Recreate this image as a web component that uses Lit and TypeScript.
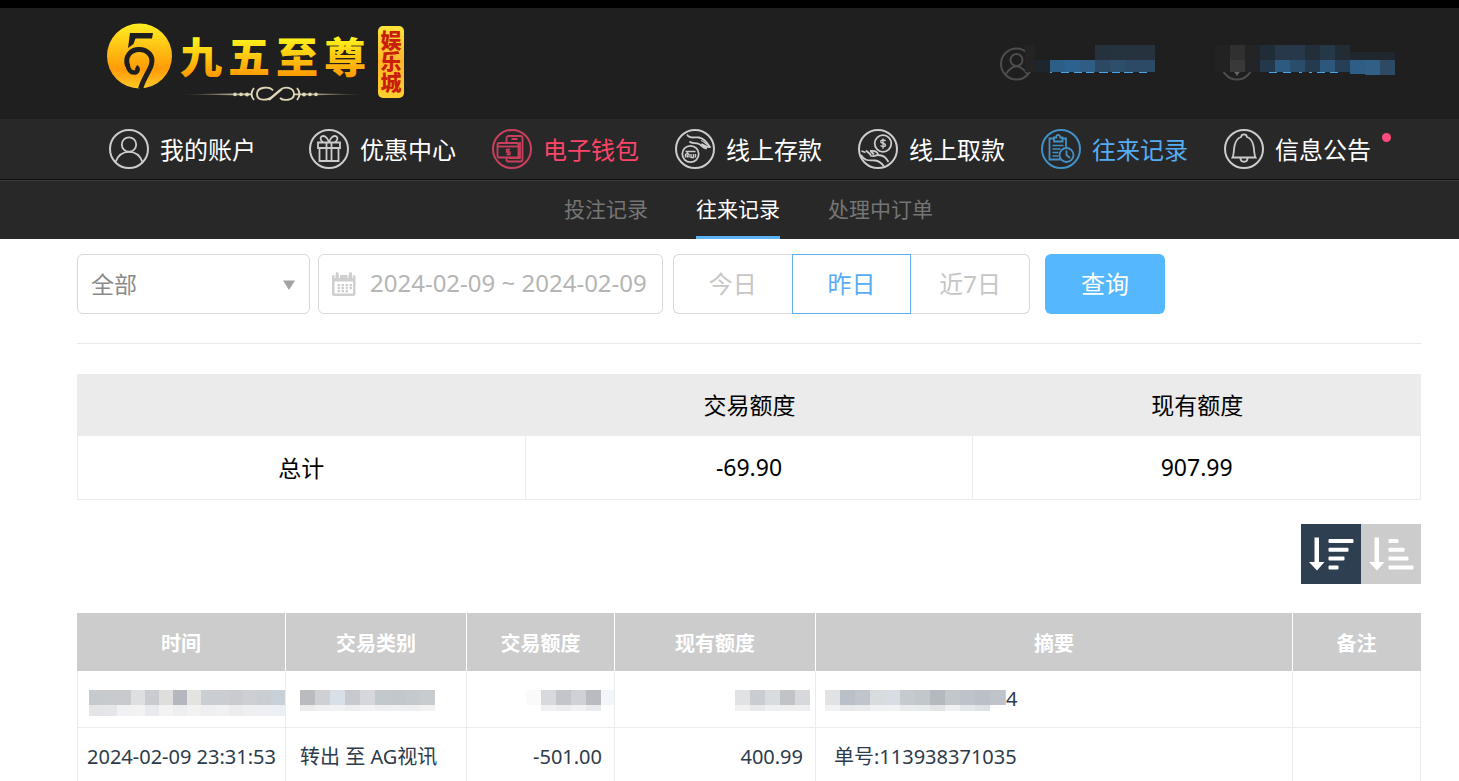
import { LitElement, html, css, svg, nothing } from "lit";
import { customElement, state } from "lit/decorators.js";
import { classMap } from "lit/directives/class-map.js";

const ring = svg`<circle cx="20" cy="20" r="19" stroke-width="2"/>`;

const icons = {
  user: svg`${ring}<circle cx="20" cy="15.5" r="7.2"/><path d="M6.5 33C9 26 14 22.800 20 22.800S31 26 33.500 33"/>`,
  gift: svg`${ring}<path d="M9 13.500h22v5.500H9zM10.500 19h19v13h-19zM17.500 13.500V32M22.500 13.500V32"/><path d="M20 13C18 8 15 6 12.500 7.500C10.500 9 12 12 14 13.300M20 13C22 8 25 6 27.500 7.500C29.500 9 28 12 26 13.300"/>`,
  wallet: svg`${ring}<path d="M14.500 14V9a2 2 0 0 1 2-2h12a2 2 0 0 1 2 2v21.500a2 2 0 0 1-2 2h-12a2 2 0 0 1-2-2V29M19.500 10h6M17 29h11V13"/><rect x="5.500" y="14" width="21" height="14.500" rx="1.500"/><path d="M5.500 17.500h21"/><path d="M18 20.500h-3.500v2.500H18v2.500h-3.500M16.200 19.500v7" stroke-width="1.300"/>`,
  deposit: svg`${ring}<circle cx="15.500" cy="25" r="8.200"/><path d="M10.500 22.500h10M10.500 28.500v-3l2-1.500 1.500 1.500v3M12.300 28.500v-3M16 25v3.500h2.500V25M20.500 25v3.500" stroke-width="1.400"/><path d="M12 5.500C14 10 19 8 24 8.500C28 9 31 12 35 18C32 19 29 16 26.500 15C29 17 32 18 31 19.500C28 18.500 26 16 24 15C20 13.500 17 15 14.500 12.500"/><path d="M26 11.500c3 1 5 3.500 8 5.500" stroke-width="1.200"/>`,
  withdraw: svg`${ring}<circle cx="25" cy="14.500" r="8.300"/><path d="M27.500 12c-1-1.500-5-1.300-4.700.8c.3 1.800 4.600 1.200 4.700 3.300c0 2-4 2-5 .4M25 9.500v10.300" stroke-width="1.400"/><path d="M3.500 22l4 1.500M8 21.500l5 4.500M12.500 22l3.500 3.500"/><path d="M12 22c5-.500 7.500 1 8 3.500c-2 1.500-5 2-8 1M19.500 26.500c4-1 8 1 11 6.500M3 26c4 7 9 5 14 5.500c5 .5 7 3 9 6"/>`,
  record: svg`${ring}<path d="M13.500 9.500h-5V30.500h11M25 18V9.500h-4.500M13 12.500V8.500h2.200c0-3.500 4-3.500 4 0h2.300v4z"/><path d="M11.500 16.500h11M11.500 20h8M11.500 23.500h6M11.500 27h6" stroke-width="1.500"/><circle cx="25.500" cy="26" r="7"/><path d="M25.500 21.500V26l3.500 3"/>`,
  bell: svg`${ring}<path d="M8.500 28.500C10 26 9.500 22 10.500 17C11.500 12 13.500 9 17 8c.5-3.500 5.500-3.500 6 0C26.500 9 28.500 12 29.500 17c1 5 .5 9 2 11.500zM16.500 29c0 5 7 5 7 0"/>`,
};

const calendar = svg`<path d="M1.500 4H4V2.500a1.500 1.500 0 0 1 3 0V4H17.500V2.500a1.500 1.500 0 0 1 3 0V4h2A1.500 1.500 0 0 1 24 5.500V23a2 2 0 0 1-2 2H2.500a2 2 0 0 1-2-2V5.500A1.500 1.500 0 0 1 1.500 4z" fill="#cfcfcf"/><path d="M3 10.500h18.500v12H3z" fill="#fff"/><path d="M6 13h2.500v2.200H6zM10 13h2.500v2.200H10zM14 13h2.500v2.200H14zM18 13h2.500v2.200H18zM6 16h2.500v2.200H6zM10 16h2.500v2.200H10zM14 16h2.500v2.200H14zM18 16h2.500v2.200H18zM6 19h2.500v2.200H6zM10 19h2.500v2.200H10zM14 19h2.500v2.200H14z" fill="#cfcfcf"/><path d="M3.500 1v6M8 1v6M16.500 1v6M21.300 1v6" stroke="#fff"/>`;

type Block = [number, number, number, number, string];
const blocks = (list: Block[]) =>
  list.map(([x, y, w, h, c]) => svg`<rect x=${x} y=${y} width=${w} height=${h} fill=${c}/>`);

const strip = (x: number, colors: string[], y = 19, h = 15, w = 15): Block[] =>
  colors.map((c, i) => [x + i * w, y, w, h, c] as Block);

const timeMask: Block[] = [
  ...strip(11, ["#c7cacd", "#c7cbce", "#c8cacd", "#dedfe0", "#c9cbd1", "#dededd", "#b4b8be", "#e3e4e2", "#cacdd1", "#cacdd1", "#c9cbcf", "#cdcfd4", "#c9ced3", "#c9d1d8"], 19, 15, 14),
  ...strip(11, ["#e3e5e7", "#e4e6e9", "#f0f1f2", "#f2f2f3", "#e9eaed", "#f3f3f3", "#edeef0", "#f2f2f3", "#eeeff0", "#f1f1f3", "#ececef", "#eeeff1", "#edeff2", "#eceff3"], 34, 11, 14),
];
const typeMask: Block[] = [
  ...strip(14, ["#b9bbbf", "#ced0d3", "#d8dfe6", "#c7c9cf", "#d5d7dc", "#c3c8cd", "#c2c7cc", "#c4c9cd", "#c9cccf"]),
  ...strip(14, ["#ececed", "#f0f0f1", "#f0f2f4", "#eeeef0", "#f2f2f3", "#efeff1", "#eff0f1", "#eeeff0", "#f2f2f3"], 34, 6),
];
const amountMask: Block[] = [
  ...strip(59, ["#fafafb", "#d8d9dc", "#c4c5ca", "#cfd1d6", "#b9bbc0"]),
  [134, 19, 13, 15, "#f2f5f9"],
  ...strip(74, ["#f0f0f2", "#ededf0", "#f1f1f3", "#e9eaed"], 34, 6),
];
const balanceMask: Block[] = [
  ...strip(120, ["#e1e2e3", "#c9ccd1", "#d9dcdf", "#c1c3c7", "#d6d8dc"]),
  ...strip(120, ["#f1f1f1", "#e7e9eb", "#eeeff0", "#eeeeef", "#efeff1"], 34, 6),
];
const summaryMask: Block[] = [
  ...strip(9, ["#e0e2e4", "#b9c0c8", "#bfc5cb", "#d8dcdf", "#d7dde3", "#c4cace", "#c1c7ca", "#b3b9be", "#c1c7cb", "#bdc3c8", "#bbc0c8", "#bfc4ca"]),
  [189, 19, 1, 15, "#c9d1d6"],
  ...strip(9, ["#f1f2f3", "#e7e9eb", "#e9ebed", "#f0f1f2", "#f0f2f4", "#e9ebec", "#e8ebec", "#e2e4e6", "#eef0f1", "#e4e8ea", "#dee2e6"], 34, 6),
];

const mask = (width: number, list: Block[]) =>
  html`<svg class="mask" width=${width} height="56" viewBox="0 0 ${width} 56" aria-hidden="true">${blocks(list)}</svg>`;

@customElement("app-root")
export class AppRoot extends LitElement {
  @state() private range = 1;
  @state() private descending = true;

  static styles = css`
    :host {
      display: block;
      height: 100vh;
      overflow-y: auto;
      scrollbar-width: none;
      background: #fff;
      color: #000;
      font-family: "Noto Sans", "Noto Sans CJK SC", sans-serif;
    }
    * { box-sizing: border-box; }
    a { text-decoration: none; color: inherit; }
    button, input, select { font: inherit; margin: 0; cursor: pointer; }
    svg { display: block; flex: none; }
    .top {
      display: flex;
      justify-content: space-between;
      height: 119px;
      border-top: 8px solid #000;
      background: #1f1f1f;
      padding: 0 59px 0 103px;
    }
    .info { display: flex; gap: 50px; padding-top: 32px; }
    .logo { padding-top: 8px; }
    .brand {
      font-family: "Noto Sans CJK SC", sans-serif;
      font-weight: 900;
    }
    .seal { writing-mode: vertical-rl; }
    .nav {
      display: flex;
      gap: 36px;
      height: 60px;
      background: #282828;
      padding-left: 109px;
      font-size: 24px;
      line-height: 36px;
      color: #fff;
      white-space: nowrap;
    }
    .item { position: relative; display: flex; align-items: center; gap: 11px; }
    .item:first-child { margin-right: 17px; }
    .item svg { fill: none; stroke: #ccc; stroke-width: 1.8; }
    .label { padding-top: 2px; }
    .item.hot { color: #ff4468; }
    .item.hot svg { stroke: #c8405c; }
    .item.current { color: #55adf5; }
    .item.current svg { stroke: #4490c4; }
    .dot {
      position: absolute;
      top: 14px;
      right: -20px;
      width: 9px;
      height: 9px;
      border-radius: 50%;
      background: #ff4a7d;
    }
    .tabs {
      display: flex;
      justify-content: center;
      gap: 48px;
      height: 60px;
      border-top: 1px solid #111;
      background: #282828;
      box-shadow: inset 0 1px #3a3a3a;
      padding-left: 38px;
      font-size: 21px;
      line-height: 32px;
      color: #757575;
    }
    .tab { padding-top: 13px; border-bottom: 3px solid transparent; }
    .tab.active { color: #fff; border-color: #5cb3f5; }
    .content { padding: 15px 38px 0 77px; }
    .filters {
      display: flex;
      height: 90px;
      border-bottom: 1px solid #e9e9e9;
      font-size: 24px;
    }
    .field, .date, .range, .query { height: 60px; border-radius: 6px; }
    .field { position: relative; width: 233px; margin-right: 8px; }
    .select {
      appearance: none;
      width: 100%;
      height: 60px;
      border: 1px solid #d9d9d9;
      border-radius: 6px;
      background: #fff;
      padding: 0 13px;
      font-size: 23px;
      color: #8a8a8a;
    }
    .caret { position: absolute; right: 14px; top: 26px; pointer-events: none; }
    .date {
      display: flex;
      align-items: center;
      gap: 13px;
      width: 345px;
      margin-right: 10px;
      border: 1px solid #d9d9d9;
      padding-left: 12px;
    }
    .date input {
      flex: 1;
      min-width: 0;
      border: 0;
      padding: 0 0 4px;
      background: none;
      color: #b5b5b5;
      outline: none;
    }
    .range { display: flex; width: 357px; margin-right: 15px; }
    .range button {
      flex: 1;
      border: solid #d9d9d9;
      border-width: 1px 0;
      background: #fff;
      padding: 0 0 4px;
      color: #c6c6c6;
    }
    .range button:first-child { border-left-width: 1px; border-radius: 6px 0 0 6px; }
    .range button:last-child { border-right-width: 1px; border-radius: 0 6px 6px 0; }
    .range button.on { border: 1px solid #5cb0ee; color: #58acf5; }
    .query { width: 120px; border: 0; background: #55b8ff; color: #fff; padding: 0 0 4px; }
    table { width: 100%; border-collapse: separate; border-spacing: 0; table-layout: fixed; }
    th, td { padding: 0; }
    .totals {
      margin-top: 30px;
      border-left: 1px solid #ececec;
      font-size: 23px;
      text-align: center;
    }
    .totals th { height: 62px; background: #ebebeb; font-weight: 400; padding-bottom: 2px; }
    .totals td { height: 64px; border: solid #ececec; border-width: 0 1px 1px 0; padding-bottom: 2px; }
    .sort { display: flex; justify-content: flex-end; margin: 24px 0 29px; }
    .sort button {
      width: 60px;
      height: 60px;
      border: 0;
      padding: 0;
      background: #ccc;
    }
    .sort button.on { background: #2f3f52; }
    .log { font-size: 20px; line-height: 30px; color: #2d3b4b; }
    .log th {
      height: 58px;
      padding-top: 3px;
      background: #ccc;
      color: #fff;
      font-weight: 700;
      border-right: 1px solid #fff;
    }
    .log th:last-child { border-right-color: #ccc; }
    .log td {
      height: 57px;
      border: solid #ececec;
      border-width: 0 1px 1px 0;
      padding-top: 2px;
      white-space: nowrap;
    }
    .log td:first-child { border-left-width: 1px; padding-left: 9px; }
    .log .type { padding-left: 14px; }
    .log .num { text-align: right; padding-right: 12px; }
    .log .text { padding-left: 18px; }
    .log .masked td { padding: 0; }
    .w-time { width: 209px; }
    .w-type { width: 181px; }
    .w-amount { width: 148px; }
    .w-balance { width: 201px; }
    .w-note { width: 128px; }
    .tail { display: flex; align-items: center; }
  `;

  private logo() {
    return html`<a class="logo" href="#" aria-label="九五至尊娱乐城">
      <svg width="306" height="92" viewBox="103 16 306 92" class="brand">
        <defs>
          <linearGradient id="ball" x2="0" y2="1"><stop offset="0" stop-color="#ffed22"/><stop offset=".7" stop-color="#ff9b08"/><stop offset="1" stop-color="#ffc928"/></linearGradient>
          <linearGradient id="seal" x2="0" y2="1"><stop offset="0" stop-color="#ffe43a"/><stop offset=".5" stop-color="#ffb52a"/><stop offset="1" stop-color="#ffd02e"/></linearGradient>
          <linearGradient id="gold" x2="0" y2="1"><stop offset=".25" stop-color="#fff01c"/><stop offset=".9" stop-color="#ff9300"/></linearGradient>
          <linearGradient id="line"><stop offset="0" stop-color="#d9cda0" stop-opacity="0"/><stop offset=".4" stop-color="#e8dfbb"/><stop offset=".6" stop-color="#e8dfbb"/><stop offset="1" stop-color="#d9cda0" stop-opacity="0"/></linearGradient>
        </defs>
        <circle cx="139.500" cy="56" r="32.500" fill="url(#ball)"/>
        <path d="M130 33h23l-1 5.500h-16.500l-2 5.500-5.500 4z" fill="#1f1f1f"/>
        <path d="M127.500 66C124.500 56 131 49.500 139 49.500C148 49.500 153.500 56 151.500 64C150 71 144 77 140.500 89" fill="none" stroke="#1f1f1f" stroke-width="5"/>
        <path d="M127.500 64C128 70 131 73 135 72.500C138 72 138.500 68.500 136 67" fill="none" stroke="#1f1f1f" stroke-width="4.500"/>
        <g font-size="42" fill="url(#gold)">
          <text x="180" y="73">九</text><text x="228" y="73">五</text><text x="276" y="73">至</text><text x="324" y="73">尊</text>
        </g>
        <path d="M180 94.300l52-.8h20v1.800h-20zM366 94.300l-52-.8h-20v1.800h20z" fill="url(#line)"/>
        <g fill="none" stroke="#e0d8b8" stroke-width="1.800"><path d="M273 90.500c-3-4.500-16-4-16 3.500s11 7 16 2l7-6c4-4 14-3 14 4s-11 7-14 4M269 100l13-11"/><path d="M254 88q-5 6 0 12M297 88q5 6 0 12"/></g>
        <g fill="#e0d8b8"><circle cx="235" cy="94.400" r="1.800"/><circle cx="241" cy="94.400" r="1.800"/><circle cx="247" cy="94.400" r="2"/><circle cx="304" cy="94.400" r="2"/><circle cx="310" cy="94.400" r="1.800"/><circle cx="316" cy="94.400" r="1.800"/></g>
        <rect x="378" y="26" width="26" height="72" rx="5" fill="url(#seal)"/>
        <text class="seal" x="391" y="30" font-size="21" fill="#c81e0a">娱乐城</text>
      </svg>
    </a>`;
  }

  private account() {
    const left: Block[] = [
      [25, 5, 10, 27, "#242424"], [35, 20, 15, 12, "#1e252d"],
      [50, 20, 15, 12, "#2c5e87"], [65, 20, 15, 12, "#2d6290"], [80, 20, 15, 12, "#305d84"],
      [95, 5, 15, 15, "#25323e"], [110, 5, 15, 15, "#25333f"], [125, 5, 30, 15, "#26323d"],
      [95, 20, 15, 12, "#2c4862"], [110, 20, 15, 12, "#2d4f6c"], [125, 20, 30, 12, "#2c4a65"],
      [50, 32, 2, 1, "#4aa4e6"], [61, 32, 8, 1, "#4aa4e6"], [74, 32, 8, 1, "#4aa4e6"], [86, 32, 8, 1, "#4aa4e6"], [99, 32, 9, 1, "#4aa4e6"], [112, 32, 8, 1, "#4aa4e6"], [124, 32, 9, 1, "#4aa4e6"], [139, 32, 8, 1, "#4aa4e6"],
    ];
    const right: Block[] = [
      [0, 5, 15, 27, "#222"], [15, 5, 15, 15, "#303030"], [15, 20, 15, 12, "#393939"], [30, 5, 15, 27, "#232426"],
      [45, 5, 15, 15, "#202c37"], [45, 20, 15, 12, "#23384b"], [60, 5, 30, 15, "#26384a"], [60, 20, 15, 12, "#2d5a80"], [75, 20, 15, 12, "#2b4d6c"],
      [90, 5, 15, 15, "#222e39"], [90, 20, 15, 12, "#243a4e"], [105, 5, 15, 15, "#253848"], [105, 20, 15, 12, "#2c587e"], [120, 5, 15, 15, "#222c35"], [120, 20, 15, 12, "#263f54"],
      [135, 12, 45, 8, "#20272e"], [135, 20, 15, 14, "#2e5d85"], [150, 20, 15, 15, "#315f86"], [165, 20, 15, 15, "#2d4a65"],
      [54, 32, 8, 1, "#4aa4e6"], [68, 32, 8, 1, "#4aa4e6"], [84, 32, 3, 1, "#4aa4e6"], [94, 32, 3, 1, "#4aa4e6"], [102, 32, 8, 1, "#4aa4e6"], [115, 32, 8, 1, "#4aa4e6"],
    ];
    return html`<div class="info">
      <svg width="165" height="44" viewBox="0 0 165 44" aria-hidden="true">
        <g fill="none" stroke="#4d4d4d" stroke-width="2"><circle cx="16.500" cy="24" r="15.500"/><circle cx="16.500" cy="20" r="6"/><path d="M5.500 34.500Q16.500 18 27.500 34.500"/></g>
        ${blocks(left)}
      </svg>
      <svg width="185" height="44" viewBox="0 0 185 44" aria-hidden="true">
        <g fill="none" stroke="#4d4d4d" stroke-width="2"><circle cx="22" cy="24" r="15.500"/></g><path d="M18 30h8l-4 6z" fill="#666"/>
        ${blocks(right)}
      </svg>
    </div>`;
  }

  private navItem(icon: keyof typeof icons, label: string, kind = "") {
    return html`<a class="item ${kind}" href="#"><svg width="40" height="40" viewBox="0 0 40 40" aria-hidden="true">${icons[icon]}</svg><span class="label">${label}</span>${kind === "notice" ? html`<span class="dot"></span>` : nothing}</a>`;
  }

  private sortButton(desc: boolean) {
    const widths = desc ? [25, 20, 16, 10] : [10, 16, 20, 25];
    return html`<button class=${classMap({ on: this.descending === desc })} aria-label=${desc ? "降序" : "升序"} @click=${() => (this.descending = desc)}>
      <svg width="60" height="60" viewBox="0 0 60 60" fill="#fff"><path d="M13.500 13.500h4.500V38h5.500l-7.500 8.500L8 38h5.500z"/>${widths.map((w, i) => svg`<rect x="27.500" y=${15 + i * 8.800} width=${w} height="4" rx="1"/>`)}</svg>
    </button>`;
  }

  render() {
    return html`
      <header>
        <div class="top">${this.logo()}${this.account()}</div>
        <nav class="nav">
          ${this.navItem("user", "我的账户")}${this.navItem("gift", "优惠中心")}${this.navItem("wallet", "电子钱包", "hot")}${this.navItem("deposit", "线上存款")}${this.navItem("withdraw", "线上取款")}${this.navItem("record", "往来记录", "current")}${this.navItem("bell", "信息公告", "notice")}
        </nav>
        <nav class="tabs">
          <a class="tab" href="#">投注记录</a><a class="tab active" href="#">往来记录</a><a class="tab" href="#">处理中订单</a>
        </nav>
      </header>
      <main class="content">
        <div class="filters">
          <div class="field">
            <select class="select" aria-label="交易类别"><option>全部</option></select>
            <svg class="caret" width="14" height="10" viewBox="0 0 14 10" aria-hidden="true"><path d="M1 .500h12L7 10z" fill="#a3a3a3"/></svg>
          </div>
          <label class="date">
            <svg width="26" height="26" viewBox="0 0 25 26" aria-hidden="true">${calendar}</svg>
            <input type="text" aria-label="时间" value="2024-02-09 ~ 2024-02-09" />
          </label>
          <div class="range">
            ${["今日", "昨日", "近7日"].map((t, i) => html`<button class=${classMap({ on: this.range === i })} aria-pressed=${this.range === i} @click=${() => (this.range = i)}>${t}</button>`)}
          </div>
          <button class="query">查询</button>
        </div>
        <table class="totals">
          <thead><tr><th></th><th>交易额度</th><th>现有额度</th></tr></thead>
          <tbody><tr><td>总计</td><td>-69.90</td><td>907.99</td></tr></tbody>
        </table>
        <div class="sort">${this.sortButton(true)}${this.sortButton(false)}</div>
        <table class="log">
          <thead>
            <tr><th class="w-time">时间</th><th class="w-type">交易类别</th><th class="w-amount">交易额度</th><th class="w-balance">现有额度</th><th>摘要</th><th class="w-note">备注</th></tr>
          </thead>
          <tbody>
            <tr class="masked">
              <td>${mask(207, timeMask)}</td>
              <td>${mask(180, typeMask)}</td>
              <td>${mask(147, amountMask)}</td>
              <td>${mask(200, balanceMask)}</td>
              <td><div class="tail">${mask(190, summaryMask)}4</div></td>
              <td></td>
            </tr>
            <tr>
              <td>2024-02-09 23:31:53</td>
              <td class="type">转出 至 AG视讯</td>
              <td class="num">-501.00</td>
              <td class="num">400.99</td>
              <td class="text">单号:113938371035</td>
              <td></td>
            </tr>
          </tbody>
        </table>
      </main>
    `;
  }
}
